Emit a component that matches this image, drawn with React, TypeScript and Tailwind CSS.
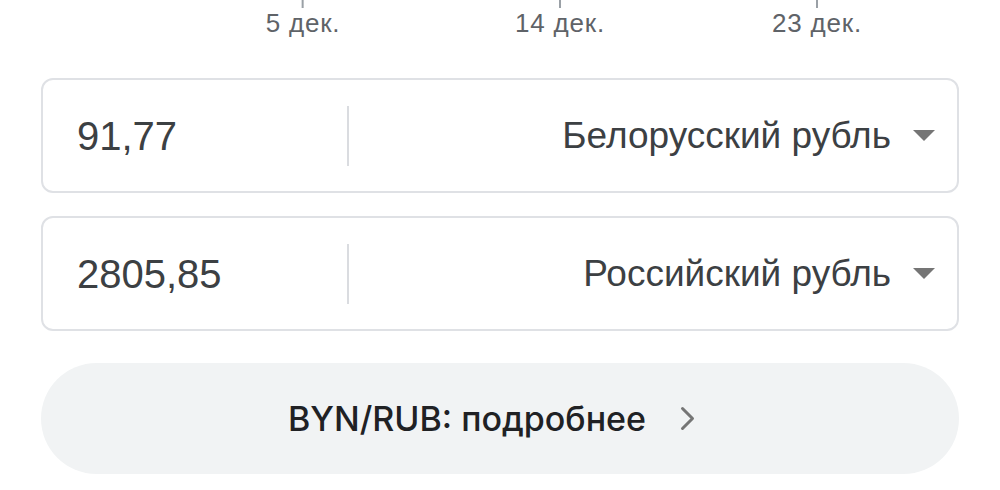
const ticks = [
  { label: '5 дек.', x: 303 },
  { label: '14 дек.', x: 560 },
  { label: '23 дек.', x: 817 },
]

function CurrencyRow({ amount, currency }: { amount: string; currency: string }) {
  return (
    <div className="flex h-[115px] items-center rounded-[12px] border-2 border-[#dfe1e5] bg-white">
      <div className="w-[304px] pl-[34px] text-[40px] text-[#3c4043]">{amount}</div>
      <div className="h-[60px] w-[2px] bg-[#dadce0]" />
      <div className="flex flex-1 items-center justify-end pr-[22px]">
        <span className="text-[37px] text-[#3c4043]">{currency}</span>
        <svg className="ml-[22px]" width="22" height="12" viewBox="0 0 22 12">
          <path d="M0 0h22L11 11z" fill="#757575" />
        </svg>
      </div>
    </div>
  )
}

export default function App() {
  return (
    <div className="h-[490px] w-[1000px] overflow-hidden bg-white font-['Liberation_Sans',Arial,sans-serif]">
      <div className="relative h-[62px]">
        {ticks.map((t) => (
          <div key={t.label} className="absolute top-0 flex -translate-x-1/2 flex-col items-center" style={{ left: t.x }}>
            <div className="h-[8px] w-[2px] bg-[#9aa0a6]" />
            <div className="text-[26px] leading-[30px] tracking-[0.8px] text-[#5f6368]">{t.label}</div>
          </div>
        ))}
      </div>
      <div className="flex flex-col gap-[23px] px-[41px] pt-[16px]">
        <CurrencyRow amount="91,77" currency="Белорусский рубль" />
        <CurrencyRow amount="2805,85" currency="Российский рубль" />
        <button className="mt-[9px] flex h-[111px] items-center justify-center rounded-full bg-[#f1f3f4] pr-[16px] font-['Inter',sans-serif] text-[34px] font-medium text-[#202124]">
          BYN/RUB: подробнее
          <svg className="ml-[34px]" width="16" height="25" viewBox="0 0 16 25">
            <path d="M2.5 2.5l10 10-10 10" fill="none" stroke="#757575" strokeWidth="3" strokeLinecap="round" strokeLinejoin="round" />
          </svg>
        </button>
      </div>
    </div>
  )
}
